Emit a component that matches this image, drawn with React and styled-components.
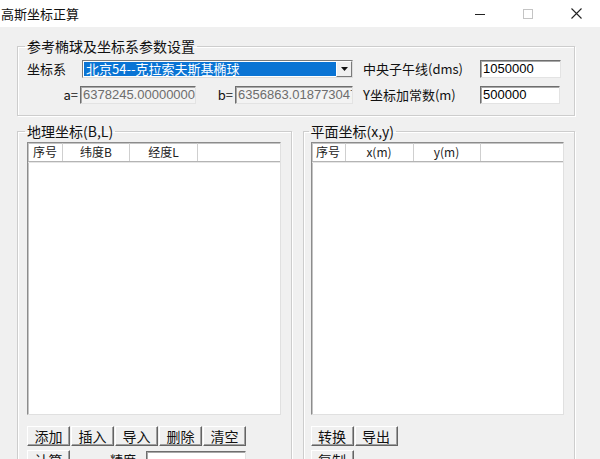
import React from 'react';
import styled, { createGlobalStyle } from 'styled-components';

const GlobalStyle = createGlobalStyle`
  html, body {
    margin: 0;
    padding: 0;
    background: #f0f0f0;
  }
  body {
    font-family: "Noto Sans CJK SC", "Noto Sans", sans-serif;
    color: #000;
  }
`;

const Window = styled.div`
  width: 600px;
  height: 459px;
  overflow: hidden;
  background: #f0f0f0;
  display: flex;
  flex-direction: column;
`;

const TitleBar = styled.div`
  height: 27px;
  flex: none;
  background: #ffffff;
  display: flex;
  align-items: center;
  justify-content: space-between;
  padding-left: 1px;
`;

const Title = styled.div`
  font-size: 13px;
  line-height: 27px;
  color: #111;
`;

const Controls = styled.div`
  display: flex;
  height: 27px;
`;

const ControlBtn = styled.div`
  width: 48px;
  height: 27px;
  display: flex;
  align-items: center;
  justify-content: center;
`;

const Body = styled.div`
  padding: 10px 25px 0 17px;
  display: flex;
  flex-direction: column;
`;

const Group = styled.fieldset`
  margin: ${p => p.$top || 0}px 0 0 0;
  padding: ${p => p.$pad};
  border: 1px solid #cdcdcd;
  box-shadow: inset 1px 1px 0 #ffffff, 1px 1px 0 #ffffff;
  min-width: 0;
  width: ${p => p.$w ? `${p.$w}px` : 'auto'};
  box-sizing: border-box;
`;

const Legend = styled.legend`
  font-size: 14px;
  line-height: 18px;
  padding: 0 2px;
  margin-left: -2px;
  color: #111;
`;

const ParamGrid = styled.div`
  display: grid;
  grid-template-columns: 53px 116px 39px 118px 127px 82px;
  grid-template-rows: 18px 18px;
  row-gap: 8px;
  align-items: center;
`;

const Label = styled.div`
  font-size: 13px;
  line-height: 18px;
  white-space: nowrap;
  text-align: ${p => p.$right ? 'right' : 'left'};
  padding-left: ${p => p.$indent || 0}px;
  padding-right: ${p => p.$right ? 2 : 0}px;
  color: #111;
`;

const Select = styled.div`
  grid-column: 2 / span 3;
  margin-left: 2px;
  height: 18px;
  box-sizing: border-box;
  border: 1px solid #7a7a7a;
  border-right-color: #dcdcdc;
  border-bottom-color: #dcdcdc;
  background: #fff;
  display: flex;
  padding: 1px;
`;

const SelectValue = styled.div`
  flex: 1;
  background: #0a74d4;
  color: #fff;
  font-size: 13px;
  line-height: 14px;
  padding-left: 2px;
  white-space: nowrap;
`;

const DropButton = styled.div`
  width: 16px;
  flex: none;
  box-sizing: border-box;
  background: #f0f0f0;
  border: 1px solid #fff;
  border-right-color: #7a7a7a;
  border-bottom-color: #7a7a7a;
  display: flex;
  align-items: center;
  justify-content: center;
  margin-top: -1px;
  margin-bottom: -1px;
  margin-right: -1px;
`;

const TextBox = styled.div`
  height: 18px;
  width: ${p => p.$w ? `${p.$w}px` : 'auto'};
  box-sizing: border-box;
  border: 1px solid #6e6e6e;
  border-right-color: #e3e3e3;
  border-bottom-color: #e3e3e3;
  box-shadow: inset 1px 1px 0 #a8a8a8;
  background: ${p => p.$disabled ? '#f3f3f3' : '#ffffff'};
  color: ${p => p.$disabled ? '#6d6d6d' : '#000'};
  font-family: "Liberation Sans", Arial, sans-serif;
  font-size: 13px;
  line-height: 16px;
  padding-left: 2px;
  white-space: nowrap;
  overflow: hidden;
  margin-right: ${p => p.$mr || 0}px;
`;

const Columns = styled.div`
  display: flex;
  gap: 11px;
`;

const ListView = styled.div`
  height: 273px;
  box-sizing: border-box;
  background: #fff;
  border: 1px solid #8c8c8c;
  border-right-color: #e0e0e0;
  border-bottom-color: #e0e0e0;
  box-shadow: inset 1px 1px 0 #c4c4c4;
`;

const HeaderRow = styled.div`
  display: flex;
  height: 18px;
  border-bottom: 1px solid #b4b4b4;
  box-shadow: 0 1px 0 #e6e6e6;
`;

const HeaderCell = styled.div`
  width: ${p => p.$w}px;
  flex: ${p => p.$w ? 'none' : 1};
  box-sizing: border-box;
  border-right: ${p => p.$w ? '1px solid #cfcfcf' : 'none'};
  font-size: 12px;
  line-height: 18px;
  text-align: center;
  color: #222;
  white-space: nowrap;
`;

const ButtonRow = styled.div`
  display: flex;
  align-items: center;
  gap: 1px;
  margin-top: ${p => p.$mt}px;
`;

const Button = styled.div`
  width: 43px;
  height: 20px;
  box-sizing: border-box;
  background: #f0f0f0;
  border: 1px solid #ffffff;
  border-right-color: #646464;
  border-bottom-color: #646464;
  box-shadow: inset -1px -1px 0 #a0a0a0;
  font-size: 14px;
  line-height: 18px;
  text-align: center;
  color: #111;
`;

const Spacer = styled.div`
  width: ${p => p.$w}px;
`;

const GEO_COLS = [
  { title: '序号', w: 35 },
  { title: '纬度B', w: 67 },
  { title: '经度L', w: 68 },
  { title: '' },
];

const PLANE_COLS = [
  { title: '序号', w: 34 },
  { title: 'x(m)', w: 68 },
  { title: 'y(m)', w: 67 },
  { title: '' },
];

const Table = ({ cols }) => (
  <ListView>
    <HeaderRow>
      {cols.map((c, i) => (
        <HeaderCell key={i} $w={c.w}>{c.title}</HeaderCell>
      ))}
    </HeaderRow>
  </ListView>
);

const App = () => {
  return (
    <Window>
      <GlobalStyle />
      <TitleBar>
        <Title>高斯坐标正算</Title>
        <Controls>
          <ControlBtn>
            <svg width="10" height="10" viewBox="0 0 10 10">
              <line x1="0" y1="5.5" x2="10" y2="5.5" stroke="#222" strokeWidth="1" />
            </svg>
          </ControlBtn>
          <ControlBtn>
            <svg width="10" height="10" viewBox="0 0 10 10">
              <rect x="0.5" y="0.5" width="9" height="9" fill="none" stroke="#c4c4c4" strokeWidth="1" />
            </svg>
          </ControlBtn>
          <ControlBtn>
            <svg width="11" height="11" viewBox="0 0 11 11">
              <path d="M0.5 0.5 L10.5 10.5 M10.5 0.5 L0.5 10.5" stroke="#222" strokeWidth="1.1" />
            </svg>
          </ControlBtn>
        </Controls>
      </TitleBar>

      <Body>
        <Group $pad="5px 0 11px 9px">
          <Legend>参考椭球及坐标系参数设置</Legend>
          <ParamGrid>
            <Label>坐标系</Label>
            <Select>
              <SelectValue>北京54--克拉索夫斯基椭球</SelectValue>
              <DropButton>
                <svg width="7" height="4" viewBox="0 0 7 4">
                  <path d="M0 0 L7 0 L3.5 4 Z" fill="#111" />
                </svg>
              </DropButton>
            </Select>
            <Label $indent={10}>中央子午线(dms)</Label>
            <TextBox $mr={1}>1050000</TextBox>

            <Label $right>a=</Label>
            <TextBox $disabled>6378245.000000000</TextBox>
            <Label $right>b=</Label>
            <TextBox $disabled>6356863.018773047</TextBox>
            <Label $indent={10}>Y坐标加常数(m)</Label>
            <TextBox $mr={2}>500000</TextBox>
          </ParamGrid>
        </Group>

        <Columns>
          <Group $top={6} $w={275} $pad="2px 10px 0 9px">
            <Legend>地理坐标(B,L)</Legend>
            <Table cols={GEO_COLS} />
            <ButtonRow $mt={11}>
              <Button>添加</Button>
              <Button>插入</Button>
              <Button>导入</Button>
              <Button>删除</Button>
              <Button>清空</Button>
            </ButtonRow>
            <ButtonRow $mt={4}>
              <Button>计算</Button>
              <Spacer $w={38} />
              <Label>精度</Label>
              <Spacer $w={8} />
              <TextBox $w={100} />
            </ButtonRow>
          </Group>

          <Group $top={6} $w={273} $pad="2px 10px 0 7px">
            <Legend>平面坐标(x,y)</Legend>
            <Table cols={PLANE_COLS} />
            <ButtonRow $mt={11}>
              <Button>转换</Button>
              <Button>导出</Button>
            </ButtonRow>
            <ButtonRow $mt={4}>
              <Button>复制</Button>
            </ButtonRow>
          </Group>
        </Columns>
      </Body>
    </Window>
  );
};

export default App;
